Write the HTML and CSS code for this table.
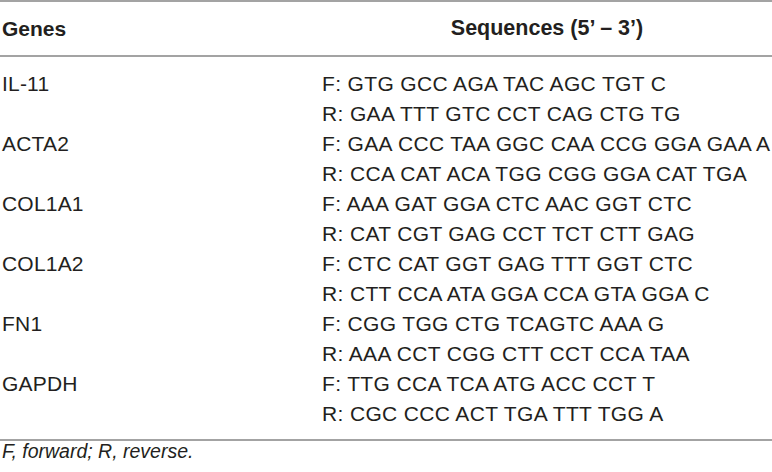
FILE: index.html
```html
<!DOCTYPE html>
<html>
<head>
<meta charset="utf-8">
<link rel="stylesheet" href="styles.css">
</head>
<body>
<table class="tbl">
  <colgroup>
    <col class="c-gene">
    <col class="c-seq">
  </colgroup>
  <thead>
    <tr>
      <th class="h-gene">Genes</th>
      <th class="h-seq">Sequences (5’ – 3’)</th>
    </tr>
  </thead>
  <tbody>
    <tr>
      <td class="gene">IL-11</td>
      <td class="seq"><div>F: GTG GCC AGA TAC AGC TGT C</div><div>R: GAA TTT GTC CCT CAG CTG TG</div></td>
    </tr>
    <tr>
      <td class="gene">ACTA2</td>
      <td class="seq"><div>F: GAA CCC TAA GGC CAA CCG GGA GAA A</div><div>R: CCA CAT ACA TGG CGG GGA CAT TGA</div></td>
    </tr>
    <tr>
      <td class="gene">COL1A1</td>
      <td class="seq"><div>F: AAA GAT GGA CTC AAC GGT CTC</div><div>R: CAT CGT GAG CCT TCT CTT GAG</div></td>
    </tr>
    <tr>
      <td class="gene">COL1A2</td>
      <td class="seq"><div>F: CTC CAT GGT GAG TTT GGT CTC</div><div>R: CTT CCA ATA GGA CCA GTA GGA C</div></td>
    </tr>
    <tr>
      <td class="gene">FN1</td>
      <td class="seq"><div>F: CGG TGG CTG TCAGTC AAA G</div><div>R: AAA CCT CGG CTT CCT CCA TAA</div></td>
    </tr>
    <tr>
      <td class="gene">GAPDH</td>
      <td class="seq"><div>F: TTG CCA TCA ATG ACC CCT T</div><div>R: CGC CCC ACT TGA TTT TGG A</div></td>
    </tr>
  </tbody>
</table>
<p class="note">F, forward; R, reverse.</p>
</body>
</html>
```

FILE: styles.css
```css
html, body {
  margin: 0;
  padding: 0;
  background: #ffffff;
}
body {
  font-family: "Liberation Sans", Arial, Helvetica, sans-serif;
  color: #231f20;
}
.tbl {
  width: 772px;
  table-layout: fixed;
  border-collapse: collapse;
  border-top: 2px solid #a3a3a3;
  border-bottom: 2px solid #a3a3a3;
}
.c-gene {
  width: 322px;
}
.c-seq {
  width: 450px;
}
.tbl th {
  height: 53px;
  padding: 0;
  font-size: 21.5px;
  font-weight: bold;
  border-bottom: 2px solid #a3a3a3;
  vertical-align: middle;
}
.tbl th.h-gene {
  text-align: left;
  padding-left: 2px;
  font-size: 21px;
}
.h-seq {
  text-align: center;
}
.tbl td {
  padding: 0;
  font-size: 21px;
  line-height: 30px;
  vertical-align: top;
  white-space: nowrap;
}
.tbl td.seq {
  letter-spacing: 0.35px;
}
.tbl td.gene {
  padding-left: 2px;
  letter-spacing: 0.2px;
}
.tbl tbody tr:first-child td {
  padding-top: 12px;
}
.tbl tbody tr:last-child td {
  padding-bottom: 10px;
}
.note {
  margin: 0;
  padding-left: 2px;
  font-size: 19.5px;
  font-style: italic;
  line-height: 20px;
  padding-top: 0;
}
```
